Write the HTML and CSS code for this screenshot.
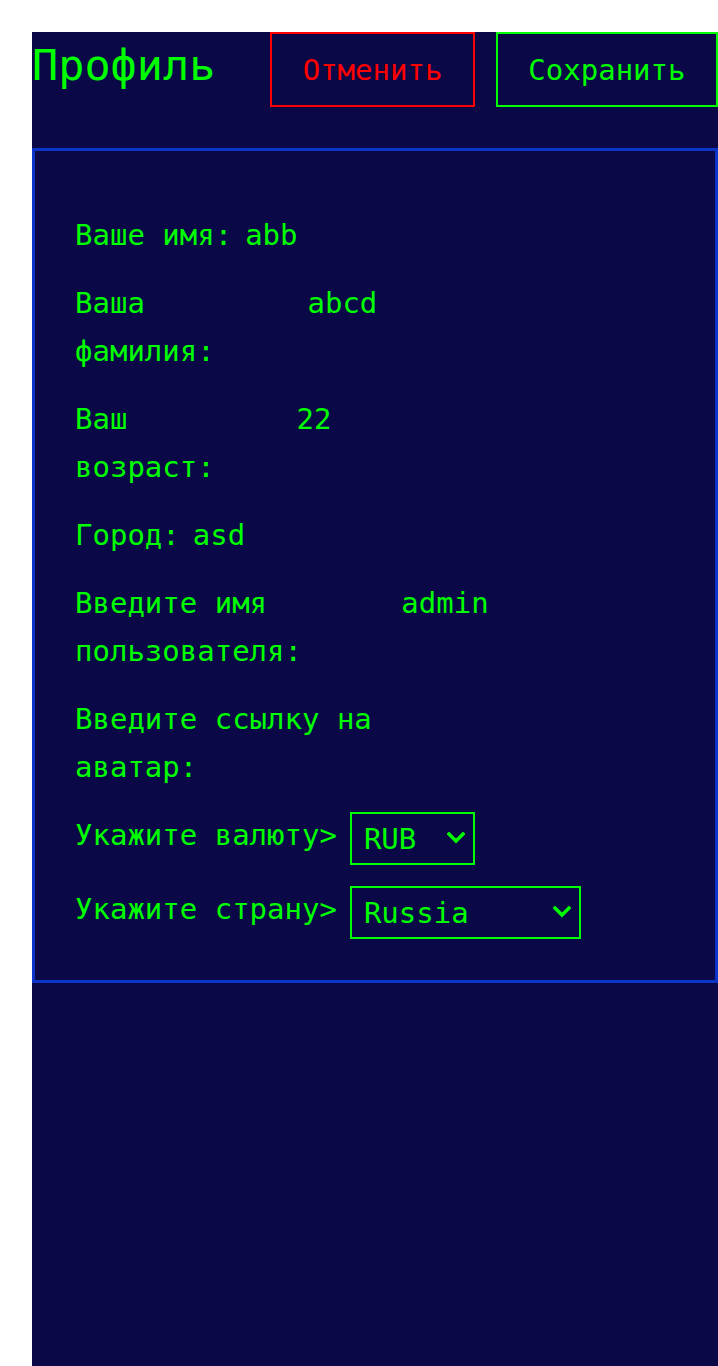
FILE: index.html
```html
<!DOCTYPE html>
<html lang="ru">
<head>
<meta charset="utf-8">
<title>Профиль</title>
<link rel="stylesheet" href="styles.css">
</head>
<body>
<div class="page">
  <header class="header">
    <h1 class="title">Профиль</h1>
    <div class="actions">
      <button class="btn btn-cancel" type="button">Отменить</button>
      <button class="btn btn-save" type="button">Сохранить</button>
    </div>
  </header>
  <form class="card">
    <div class="row">
      <label class="label">Ваше имя:</label>
      <input class="field" type="text" value="abb">
    </div>
    <div class="row">
      <label class="label">Ваша фамилия:</label>
      <input class="field" type="text" value="abcd">
    </div>
    <div class="row">
      <label class="label">Ваш возраст:</label>
      <input class="field" type="text" value="22">
    </div>
    <div class="row">
      <label class="label">Город:</label>
      <input class="field" type="text" value="asd">
    </div>
    <div class="row">
      <label class="label">Введите имя пользователя:</label>
      <input class="field" type="text" value="admin">
    </div>
    <div class="row">
      <label class="label">Введите ссылку на аватар:</label>
      <input class="field" type="text" value="">
    </div>
    <div class="row row-select">
      <label class="label">Укажите валюту&gt;</label>
      <span class="select-wrap">
        <select class="select select-currency">
          <option>RUB</option>
          <option>USD</option>
          <option>EUR</option>
        </select>
        <svg class="chevron" width="18" height="12" viewBox="0 0 18 12" aria-hidden="true"><polyline points="2,2 9,9 16,2" fill="none" stroke="#00ff00" stroke-width="3.4" stroke-linecap="square"/></svg>
      </span>
    </div>
    <div class="row row-select">
      <label class="label">Укажите страну&gt;</label>
      <span class="select-wrap">
        <select class="select select-country">
          <option>Russia</option>
          <option>Belarus</option>
          <option>Kazakhstan</option>
        </select>
        <svg class="chevron" width="18" height="12" viewBox="0 0 18 12" aria-hidden="true"><polyline points="2,2 9,9 16,2" fill="none" stroke="#00ff00" stroke-width="3.4" stroke-linecap="square"/></svg>
      </span>
    </div>
  </form>
</div>
</body>
</html>
```

FILE: styles.css
```css
html, body {
  margin: 0;
  padding: 0;
  background: #ffffff;
}

.page {
  margin: 32px 0 0 32px;
  min-height: calc(100vh - 32px);
  background: #0a0846;
  color: #00ff00;
  font-family: "DejaVu Sans Mono", monospace;
  font-size: 29px;
}

.header {
  display: flex;
  justify-content: space-between;
  align-items: flex-start;
}

.title {
  margin: 0;
  padding-top: 7px;
  font-family: "DejaVu Sans Mono", monospace;
  font-weight: normal;
  font-size: 43.5px;
  line-height: 52px;
  color: #00ff00;
}

.actions {
  display: flex;
  gap: 21px;
}

.btn {
  height: 75px;
  padding: 0 30.5px;
  background: transparent;
  font-family: "DejaVu Sans Mono", monospace;
  font-size: 29px;
  border-width: 2px;
  border-style: solid;
  cursor: pointer;
}

.btn-cancel {
  color: #ff0000;
  border-color: #ff0000;
}

.btn-save {
  color: #00ff00;
  border-color: #00ff00;
}

.card {
  margin-top: 41px;
  border: 3px solid #0a35c8;
  padding: 60px 40px 41px;
  display: flex;
  flex-direction: column;
  gap: 20px;
  line-height: 48px;
}

.row {
  display: flex;
  align-items: baseline;
  gap: 10px;
}

.row-select {
  align-items: flex-start;
  gap: 13px;
}

.label {
  color: #00ff00;
}

.field {
  box-sizing: border-box;
  width: 383px;
  min-width: 0;
  height: 48px;
  padding: 0 3px;
  border: none;
  outline: none;
  background: transparent;
  color: #00ff00;
  font-family: "DejaVu Sans Mono", monospace;
  font-size: 29px;
}

.select-wrap {
  position: relative;
  display: flex;
  flex-shrink: 0;
  margin-top: 1px;
}

.select {
  box-sizing: border-box;
  height: 53px;
  padding: 0 34px 0 12px;
  border: 2px solid #00ff00;
  border-radius: 0;
  background: transparent;
  color: #00ff00;
  font-family: "DejaVu Sans Mono", monospace;
  font-size: 29px;
  line-height: normal;
  appearance: none;
  -webkit-appearance: none;
  outline: none;
}

.select-currency {
  width: 125px;
}

.select-country {
  width: 231px;
}

.chevron {
  position: absolute;
  right: 10px;
  top: 20px;
  pointer-events: none;
}
```
